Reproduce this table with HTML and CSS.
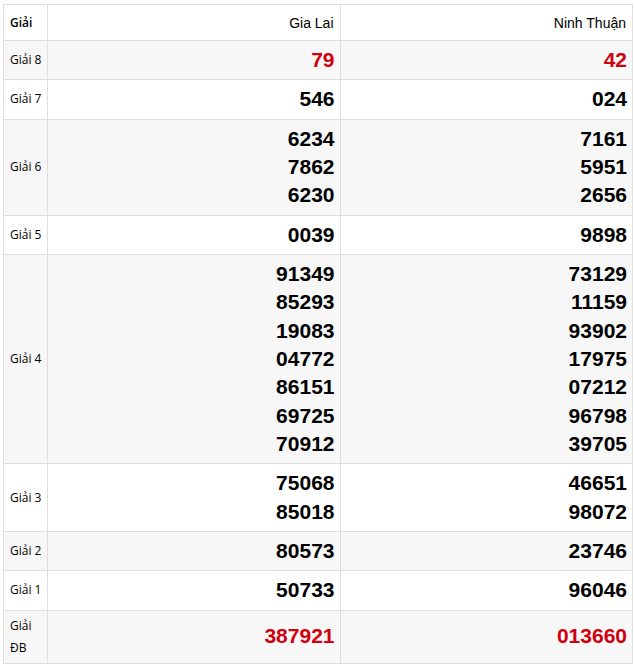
FILE: index.html
```html
<!DOCTYPE html>
<html lang="vi">
<head>
<meta charset="utf-8">
<title>Kết quả xổ số</title>
<link rel="stylesheet" href="styles.css">
</head>
<body>
<table class="kq">
  <colgroup><col class="c-label"><col class="c-prov"><col class="c-prov"></colgroup>
  <thead>
    <tr><th class="lbl">Giải</th><th class="prov">Gia Lai</th><th class="prov">Ninh Thuận</th></tr>
  </thead>
  <tbody>
    <tr class="alt"><td class="lbl">Giải 8</td><td class="num red"><div>79</div></td><td class="num red"><div>42</div></td></tr>
    <tr><td class="lbl">Giải 7</td><td class="num"><div>546</div></td><td class="num"><div>024</div></td></tr>
    <tr class="alt"><td class="lbl">Giải 6</td><td class="num"><div>6234</div><div>7862</div><div>6230</div></td><td class="num"><div>7161</div><div>5951</div><div>2656</div></td></tr>
    <tr><td class="lbl">Giải 5</td><td class="num"><div>0039</div></td><td class="num"><div>9898</div></td></tr>
    <tr class="alt"><td class="lbl">Giải 4</td><td class="num"><div>91349</div><div>85293</div><div>19083</div><div>04772</div><div>86151</div><div>69725</div><div>70912</div></td><td class="num"><div>73129</div><div>11159</div><div>93902</div><div>17975</div><div>07212</div><div>96798</div><div>39705</div></td></tr>
    <tr><td class="lbl">Giải 3</td><td class="num"><div>75068</div><div>85018</div></td><td class="num"><div>46651</div><div>98072</div></td></tr>
    <tr class="alt"><td class="lbl">Giải 2</td><td class="num"><div>80573</div></td><td class="num"><div>23746</div></td></tr>
    <tr><td class="lbl">Giải 1</td><td class="num"><div>50733</div></td><td class="num"><div>96046</div></td></tr>
    <tr class="alt"><td class="lbl db">Giải ĐB</td><td class="num red"><div>387921</div></td><td class="num red"><div>013660</div></td></tr>
  </tbody>
</table>
</body>
</html>
```
FILE: styles.css
```css
html, body {
  margin: 0;
  padding: 0;
  background: #fff;
}
body {
  padding: 4px 0 0 3px;
}
.kq {
  width: 630px;
  border-collapse: collapse;
  table-layout: fixed;
  font-family: "Liberation Sans", Arial, sans-serif;
  color: #000;
}
.c-label { width: 44px; }
.kq th, .kq td {
  border: 1px solid #dedede;
  vertical-align: middle;
}
.kq th {
  height: 36px;
  padding: 0 6px;
  box-sizing: border-box;
  font-weight: normal;
}
.kq th.lbl {
  text-align: left;
  font-family: "Open Sans", "Noto Sans", sans-serif;
  font-weight: 600;
  font-size: 12px;
}
.kq th.prov {
  text-align: right;
  font-size: 14px;
}
.kq tr.alt td { background: #f7f7f7; }
.kq td.lbl {
  padding: 4px 3px 4px 6px;
  font-family: "Open Sans", "Noto Sans", sans-serif;
  font-size: 12px;
  line-height: 22px;
  text-align: left;
}
.kq td.num {
  padding: 5px 5px 5px 6px;
  text-align: right;
  font-weight: bold;
  font-size: 21px;
  line-height: 28.33px;
}
.kq td.red { color: #d0000f; }
```
